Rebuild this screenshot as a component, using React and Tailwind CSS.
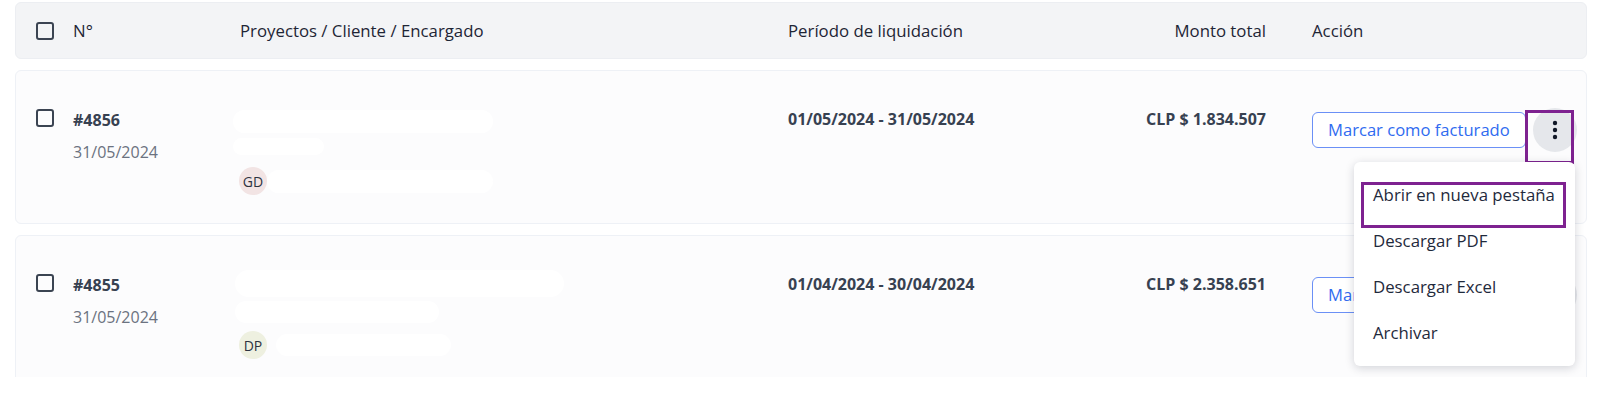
// Liquidaciones table with open row menu

const Checkbox = ({ className = '' }) => (
  <span className={`block w-[18px] h-[18px] rounded-[3px] border-2 border-[#3b4452] ${className}`} />
);

const Blob = ({ className = '' }) => <div className={`rounded-full bg-white ${className}`} />;

function Row({ n, date, period, amount, avatar, avatarBg, blobs }) {
  return (
    <div className="flex h-[154px] rounded-md border border-[#eef1f6] bg-[#fcfcfd] pl-[20px] pt-[36px]">
      <div className="w-[37px] shrink-0 pt-[2px]">
        <Checkbox />
      </div>
      <div className="w-[167px] shrink-0">
        <div className="mt-[1px] text-[16px] leading-[24px] font-bold text-[#374151]">{n}</div>
        <div className="mt-[8px] text-[16px] leading-[24px] text-[#6b7280]">{date}</div>
      </div>
      <div className="w-[548px] shrink-0">
        <Blob className={blobs[0]} />
        <Blob className={blobs[1]} />
        <div className={`flex items-center ${blobs[2]}`}>
          <span className={`-ml-px flex h-[28px] w-[28px] items-center justify-center rounded-full text-[14px] text-[#2d3340] ${avatarBg}`}>
            {avatar}
          </span>
          <Blob className={blobs[3]} />
        </div>
      </div>
      <div className="w-[292px] shrink-0 text-[16px] leading-[24px] font-bold text-[#374151]">{period}</div>
      <div className="w-[186px] shrink-0 text-right text-[16px] leading-[24px] font-bold text-[#374151]">{amount}</div>
      <div className="ml-[46px] flex items-start">
        <button className="mt-[5px] h-[36px] rounded-md border border-[#6b90f6] bg-white px-[15px] text-[16.6px] text-[#2f6bf0]">
          Marcar como facturado
        </button>
        <span className="ml-[7px] mt-[1px] flex h-[44px] w-[44px] items-center justify-center rounded-full bg-[#e5e7eb]">
          <svg width="6" height="20" viewBox="0 0 6 20" fill="#111827">
            <circle cx="3" cy="3" r="2.2" />
            <circle cx="3" cy="10" r="2.2" />
            <circle cx="3" cy="17" r="2.2" />
          </svg>
        </span>
      </div>
    </div>
  );
}

export default function App() {
  const items = ['Abrir en nueva pestaña', 'Descargar PDF', 'Descargar Excel', 'Archivar'];

  return (
    <div className="relative h-[377px] overflow-hidden bg-white pl-[15px] pr-[13px] pt-[2px] font-['Open_Sans',sans-serif]">
      {/* Header */}
      <div className="flex h-[57px] items-center rounded-md border border-[#eceef2] bg-[#f3f4f6] pl-[20px] text-[16.8px] text-[#1e2535]">
        <div className="w-[37px] shrink-0">
          <Checkbox />
        </div>
        <div className="w-[167px] shrink-0">N°</div>
        <div className="w-[548px] shrink-0">Proyectos / Cliente / Encargado</div>
        <div className="w-[292px] shrink-0">Período de liquidación</div>
        <div className="w-[186px] shrink-0 text-right">Monto total</div>
        <div className="ml-[46px]">Acción</div>
      </div>

      <div className="mt-[11px] flex flex-col gap-[11px]">
        <Row
          n="#4856"
          date="31/05/2024"
          period="01/05/2024 - 31/05/2024"
          amount="CLP $ 1.834.507"
          avatar="GD"
          avatarBg="bg-[#f2e4e4]"
          blobs={['mt-[3px] -ml-[7px] h-[23px] w-[260px]', 'mt-[5px] -ml-[7px] h-[17px] w-[91px]', 'mt-[12px]', 'h-[23px] w-[226px]']}
        />
        <Row
          n="#4855"
          date="31/05/2024"
          period="01/04/2024 - 30/04/2024"
          amount="CLP $ 2.358.651"
          avatar="DP"
          avatarBg="bg-[#eef0e0]"
          blobs={['-mt-[2px] -ml-[5px] h-[27px] w-[329px]', 'mt-[4px] -ml-[5px] h-[22px] w-[204px]', 'mt-[8px]', 'ml-[9px] h-[22px] w-[175px]']}
        />
      </div>

      {/* Highlight around kebab */}
      <div className="absolute left-[1525px] top-[110px] h-[54px] w-[49px] border-[3px] border-[#7e2290]" />

      {/* Dropdown menu */}
      <div className="absolute left-[1354px] top-[162px] w-[221px] rounded-md bg-white py-[10px] shadow-[0_2px_10px_rgba(15,23,42,0.18)]">
        {items.map((label) => (
          <div key={label} className="flex h-[46px] items-center px-[19px] text-[16.8px] text-[#1f2a3c]">
            {label}
          </div>
        ))}
        <div className="absolute left-[7px] top-[20px] h-[46px] w-[205px] border-[3px] border-[#7e2290]" />
      </div>
    </div>
  );
}
